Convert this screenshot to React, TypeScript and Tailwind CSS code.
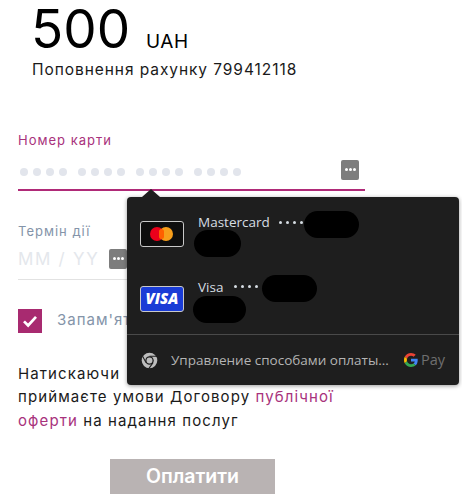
const font = { fontFamily: "Inter, sans-serif" };

function Dots() {
  return (
    <div className="flex gap-[11px]">
      {[0, 1, 2, 3].map((g) => (
        <div key={g} className="flex gap-[5px]">
          {[0, 1, 2, 3].map((d) => (
            <span key={d} className="h-2 w-2 rounded-full bg-[#e2e5ec]" />
          ))}
        </div>
      ))}
    </div>
  );
}

function KeyIcon({ className }: { className: string }) {
  return (
    <span className={`flex h-5 w-[18px] items-center justify-center gap-px rounded-[2px] bg-[#7d7d7d] ${className}`}>
      <span className="h-[3px] w-[3px] rounded-full bg-white" />
      <span className="h-[3px] w-[3px] rounded-full bg-white" />
      <span className="h-[3px] w-[3px] rounded-full bg-white" />
    </span>
  );
}

function Blob({ className }: { className: string }) {
  return <span className={`absolute rounded-full bg-black ${className}`} />;
}

function CardRow({ name, art, dotsGap }: { name: string; art: React.ReactNode; dotsGap: string }) {
  return (
    <div className="flex h-[64.500px] items-start pl-[13px]">
      <div className="mt-[8px]">{art}</div>
      <div className="-mt-px ml-[14px] flex items-center text-[13.500px] leading-5 text-[#d6dde3]">
        <span>{name}</span>
        <span className={`flex gap-[4px] ${dotsGap}`}>
          {[0, 1, 2, 3].map((d) => (
            <span key={d} className="h-[3px] w-[3px] rounded-full bg-[#d6dde3]" />
          ))}
        </span>
      </div>
    </div>
  );
}

function Autofill() {
  return (
    <div
      className="absolute left-[127px] top-[197px] h-[188px] w-[332px] rounded-[4px] bg-[#1e1e1e] shadow-[0_1px_4px_rgba(0,0,0,0.4)]"
      style={{ fontFamily: "'Open Sans', sans-serif" }}
    >
      <span className="absolute left-[15px] top-[-8px] h-0 w-0 border-x-[9px] border-b-[8px] border-x-transparent border-b-[#1e1e1e]" />
      <div className="pt-4">
        <CardRow
          name="Mastercard"
          dotsGap="ml-[9px]"
          art={
            <div className="relative h-[26px] w-11 rounded-[3px] border border-[#c9c9c9] bg-[#0e0e0e]">
              <span className="absolute left-[9px] top-[5px] h-[14px] w-[14px] rounded-full bg-[#eb001b]" />
              <span className="absolute left-[18px] top-[5px] h-[14px] w-[14px] rounded-full bg-[#f79e1b]" />
              <span className="absolute left-[18px] top-[7px] h-[10px] w-[5px] rounded-full bg-[#ff5f00]" />
            </div>
          }
        />
        <CardRow
          name="Visa"
          dotsGap="ml-[11px]"
          art={
            <div className="flex h-[26px] w-11 items-center justify-center rounded-[3px] border border-[#c9c9c9] bg-[#1a3cd6]">
              <span className="text-[15px] font-extrabold italic leading-none text-white" style={{ fontFamily: "'Open Sans', sans-serif" }}>
                VISA
              </span>
            </div>
          }
        />
      </div>
      <Blob className="left-[177px] top-[14px] h-[27px] w-[55px]" />
      <Blob className="left-[67px] top-[33px] h-[27px] w-[47px]" />
      <Blob className="left-[135px] top-[78px] h-[27px] w-[55px]" />
      <Blob className="left-[66px] top-[99px] h-[27px] w-[53px]" />
      <div className="absolute inset-x-0 top-[137px] flex h-[51px] items-center border-t border-[#4a4a4a] pl-[14px] pr-[14px]">
        <svg viewBox="0 0 24 24" className="h-[17px] w-[17px]">
          <circle cx="12" cy="12" r="11" fill="#bdbdbd" />
          <circle cx="12" cy="12" r="6" fill="#1e1e1e" />
          <circle cx="12" cy="12" r="4.2" fill="#bdbdbd" />
          <path d="M12 6H22.5M7 15L2.5 6.5M17 15L11 23.5" stroke="#1e1e1e" strokeWidth="1.5" fill="none" />
        </svg>
        <span className="ml-[13px] flex-1 whitespace-nowrap text-[13.500px] leading-5 text-[#b4b4b4]">Управление способами оплаты...</span>
        <span className="flex items-center">
          <svg viewBox="0 0 48 48" className="h-[14px] w-[14px]">
            <path fill="#ea4335" d="M24 9.5c3.5 0 6.7 1.2 9.2 3.6l6.9-6.9C35.900 2.400 30.500 0 24 0 14.600 0 6.500 5.400 2.600 13.200l8 6.200C12.500 13.700 17.800 9.500 24 9.500z" />
            <path fill="#4285f4" d="M47 24.500c0-1.600-.100-3.100-.400-4.500H24v9h13c-.600 3-2.200 5.500-4.800 7.200l7.700 6C44.400 38 47 31.800 47 24.500z" />
            <path fill="#fbbc05" d="M10.500 28.600c-.500-1.500-.800-3-.800-4.600s.300-3.100.800-4.600l-8-6.200C.900 16.500 0 20.100 0 24s.900 7.500 2.600 10.800l7.900-6.200z" />
            <path fill="#34a853" d="M24 48c6.500 0 11.900-2.100 15.900-5.800l-7.700-6c-2.200 1.400-4.900 2.300-8.200 2.300-6.200 0-11.500-4.200-13.400-9.900l-8 6.200C6.500 42.600 14.600 48 24 48z" />
          </svg>
          <span className="ml-[3px] text-[14.500px] leading-5 text-[#6f6f6f]">Pay</span>
        </span>
      </div>
    </div>
  );
}

export default function App() {
  return (
    <div className="relative h-[500px] w-[462px] bg-white px-[18px] pt-[3px]" style={font}>
      <div className="ml-[13px] flex items-baseline text-black">
        <span className="text-[53px] font-normal leading-[52px]">500</span>
        <span className="ml-[16px] text-[19px] tracking-[0.5px]">UAH</span>
      </div>
      <div className="ml-[14px] mt-[3px] whitespace-nowrap text-[15.500px] leading-5 tracking-[0.93px] text-[#1a1a1a]">Поповнення рахунку 799412118</div>

      <div className="mt-[52px] w-[347px]">
        <div className="text-[13px] leading-4 tracking-[1px] text-[#a8327c]">Номер карти</div>
        <div className="mt-[12px] flex h-6 items-center justify-between pl-[2px] pr-[6px]">
          <span className="mt-[1px]">
            <Dots />
          </span>
          <KeyIcon className="-mt-[4px]" />
        </div>
        <div className="mt-[5px] h-[2px] bg-[#b02a78]" />
      </div>

      <div className="mt-[32px] w-[109px]">
        <div className="text-[13px] leading-4 tracking-[1px] text-[#8494a9]">Термін дії</div>
        <div className="mt-[8px] flex h-[24px] items-center justify-between">
          <span className="mt-[2px] whitespace-nowrap text-[17px] tracking-[1.7px] text-[#e4e7ec]">MM / YY</span>
          <KeyIcon className="shrink-0" />
        </div>
        <div className="mt-[8px] h-px w-[120px] bg-[#e2e2e2]" />
      </div>

      <div className="mt-[29px] flex items-center">
        <span className="flex h-6 w-6 items-center justify-center bg-[#a82a70]">
          <svg viewBox="0 0 24 24" className="h-[18px] w-[18px]">
            <path d="M4 12.500L9.500 18L20 6.500" stroke="white" strokeWidth="3.600" fill="none" />
          </svg>
        </span>
        <span className="ml-[15px] whitespace-nowrap text-[15px] tracking-[1px] text-[#8494a9]">Запам'ятати</span>
      </div>

      <div className="mt-[29px] w-[340px] text-[15px] leading-[23.500px] tracking-[1.100px] text-[#1a1a1a]">
        <div>Натискаючи</div>
        <div className="whitespace-nowrap">
          приймаєте умови Договору <span className="text-[#a8327c]">публічної</span>
        </div>
        <div className="whitespace-nowrap">
          <span className="text-[#a8327c]">оферти</span> на надання послуг
        </div>
      </div>

      <div className="ml-[92px] mt-[27px] flex h-[35px] w-[165px] items-center justify-center bg-[#b9b3b3] text-[19.500px] font-semibold text-white">
        Оплатити
      </div>

      <Autofill />
    </div>
  );
}
